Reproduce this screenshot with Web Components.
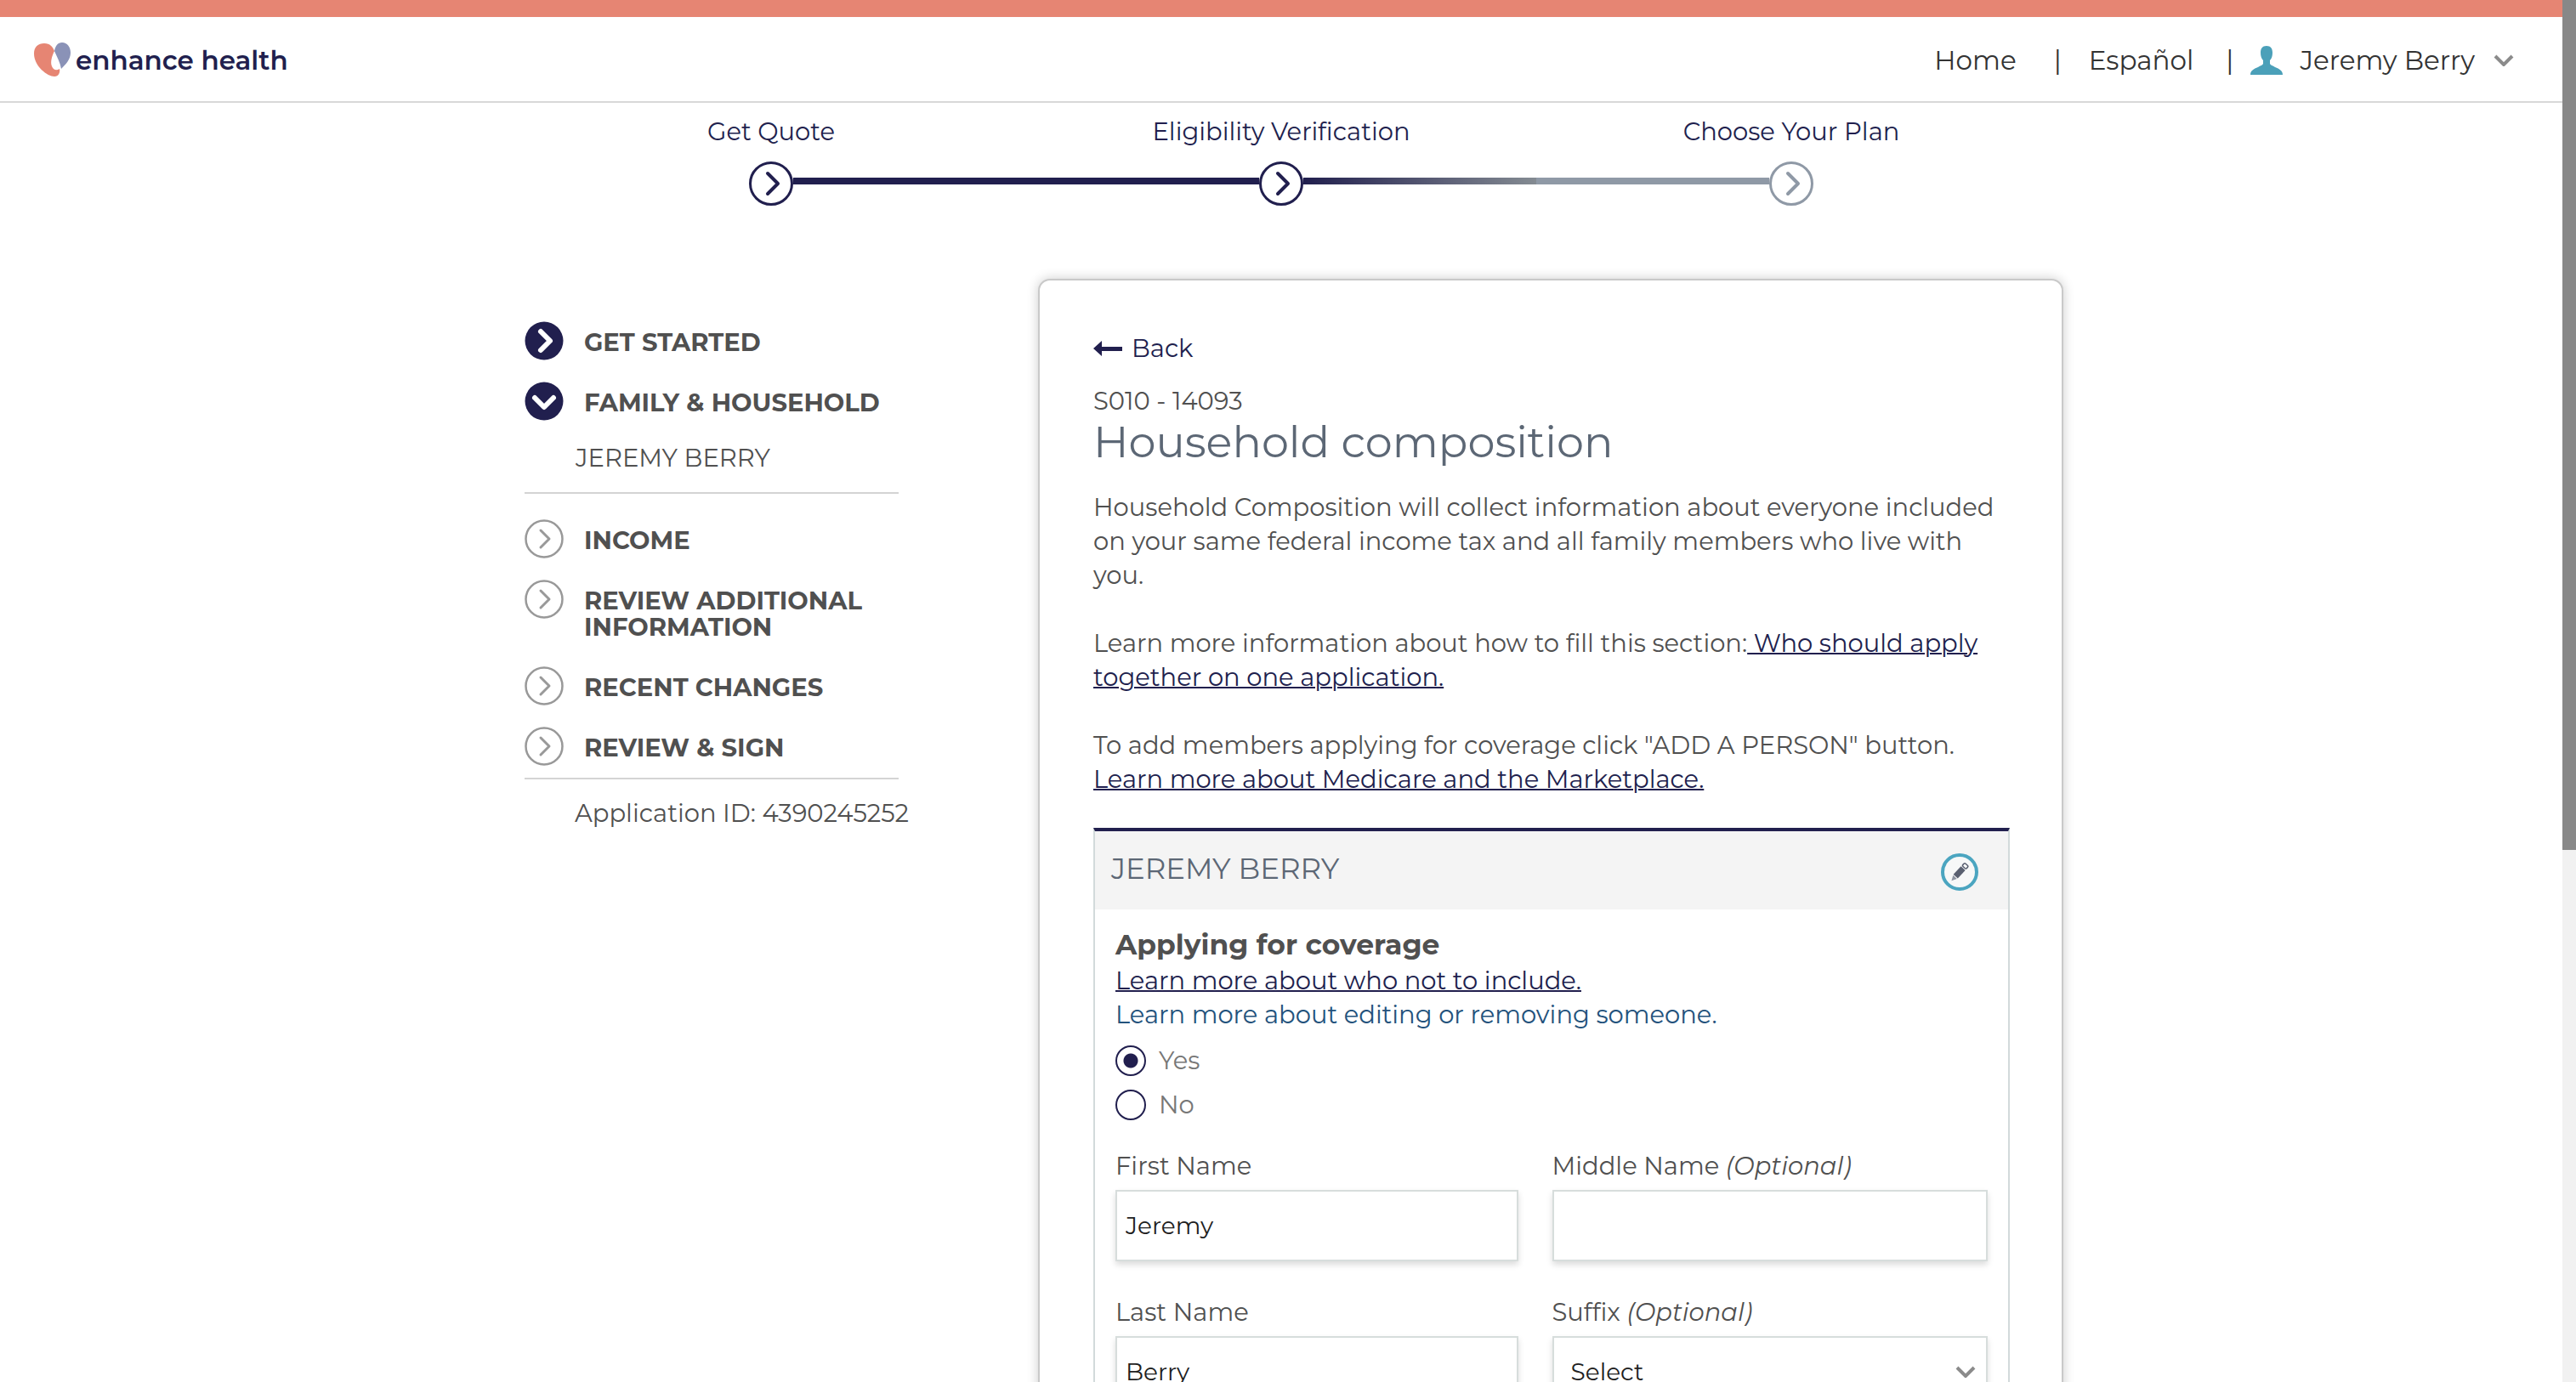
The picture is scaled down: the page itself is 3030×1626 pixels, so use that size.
<!DOCTYPE html>
<html lang="en">
<head>
<meta charset="utf-8">
<title>Household composition | enhance health</title>
<style>
  :root {
    --navy: #211f4e;
    --coral: #e68573;
    --slate: #5c6775;
    --grey: #8f99a6;
    --text: #505050;
    --rule: #d4d4d4;
    --field: #d7dddc;
  }
  body {
    margin: 0;
    font-family: Montserrat, Inter, "Open Sans", sans-serif;
    font-size: 29px;
    font-weight: 400;
    line-height: 40px;
    color: var(--text);
    background: #fff;
  }
</style>
</head>
<body>
<eh-app>
  <eh-header user="Jeremy Berry"></eh-header>
  <eh-stepper>
    <eh-step after="done">Get Quote</eh-step>
    <eh-step before="done" after="fade">Eligibility Verification</eh-step>
    <eh-step before="todo" class="todo">Choose Your Plan</eh-step>
  </eh-stepper>
  <eh-layout>
    <eh-sidebar slot="side" application="4390245252">
      <eh-nav-item state="done">GET STARTED</eh-nav-item>
      <eh-nav-item state="open">FAMILY &amp; HOUSEHOLD</eh-nav-item>
      <eh-nav-sub>JEREMY BERRY</eh-nav-sub>
      <eh-nav-item>INCOME</eh-nav-item>
      <eh-nav-item>REVIEW ADDITIONAL INFORMATION</eh-nav-item>
      <eh-nav-item>RECENT CHANGES</eh-nav-item>
      <eh-nav-item>REVIEW &amp; SIGN</eh-nav-item>
    </eh-sidebar>
    <eh-card code="S010 - 14093" heading="Household composition">
      <eh-intro></eh-intro>
      <eh-person name="JEREMY BERRY">
        <eh-coverage></eh-coverage>
        <eh-fields>
          <eh-field label="First Name" value="Jeremy"></eh-field>
          <eh-field label="Middle Name" optional></eh-field>
          <eh-field label="Last Name" value="Berry"></eh-field>
          <eh-field label="Suffix" optional options="Select,Jr.,Sr.,III,IV"></eh-field>
        </eh-fields>
      </eh-person>
    </eh-card>
  </eh-layout>
</eh-app>

<script>
const define = (name, render, ready) => customElements.define(name, class extends HTMLElement {
  constructor() {
    super();
    this.attachShadow({ mode: 'open' });
  }
  connectedCallback() {
    this.shadowRoot.innerHTML =
      '<style>*{box-sizing:border-box}:host{display:block;box-sizing:border-box}a{color:inherit;text-decoration:none}button{font:inherit;color:inherit;background:none;border:0;padding:0;cursor:pointer}svg{display:block;flex:none}</style>' + render(this);
    if (ready) ready(this);
  }
});

define('eh-app', () => `
  <style>
    :host { display: flex; height: 100vh; }
    .view { flex: 1; min-width: 0; overflow-y: auto; scrollbar-width: none; }
    .track { flex: none; width: 16px; background: #f1f1f1; }
    .thumb { height: 61.5%; background: #888; }
  </style>
  <div class="view"><slot></slot></div>
  <div class="track" aria-hidden="true"><div class="thumb"></div></div>`,
  el => {
    const view = el.shadowRoot.querySelector('.view');
    const thumb = el.shadowRoot.querySelector('.thumb');
    view.addEventListener('scroll', () => {
      const free = view.clientHeight - thumb.offsetHeight;
      const range = view.scrollHeight - view.clientHeight;
      thumb.style.marginTop = range > 0 ? (view.scrollTop / range * free) + 'px' : 0;
    });
  });

define('eh-header', el => `
  <style>
    :host { border-top: 20px solid var(--coral); border-bottom: 2px solid #d8d8d8; }
    header { display: flex; align-items: center; justify-content: space-between; height: 99px; padding: 2px 57px 0 40px; }
    .logo { display: flex; align-items: center; gap: 6px; color: var(--navy); font-size: 31px; font-weight: 600; }
    nav { display: flex; align-items: center; color: #333; font-size: 31px; }
    .bar { padding: 0 32px 0 44px; }
    .bar.last { padding: 0 20px 0 38px; }
    button { display: flex; align-items: center; gap: 20px; }
    .chev { margin-left: 2px; }
  </style>
  <header>
    <a class="logo" href="#">
      <svg width="43" height="41" viewBox="0 0 43 41" aria-hidden="true">
        <path fill="#e68573" d="M0 13C0 5 5 1 12 1c7 0 10 4 12 9-3 6-5 13-3 18 2 5 6 5 9 3 1 4-1 9-6 9C16 40 0 28 0 13z"/>
        <path fill="#8a92b7" d="M24 10c1-6 4-10 9-10 6 0 10 5 10 12 0 8-6 14-11 19-1-7-5-14-8-21z"/>
      </svg>
      <span>enhance health</span>
    </a>
    <nav>
      <a href="#">Home</a><span class="bar">|</span>
      <a href="#">Español</a><span class="bar last">|</span>
      <button type="button">
        <svg width="38" height="34" viewBox="0 0 38 34" aria-hidden="true"><path fill="#4ba0b9" d="M19 0c5 0 7 3 7 8 0 4-1 7-3 9v4c1 2 3 2 6 4 5 2 9 4 9 9H0c0-5 4-7 9-9 3-2 5-2 6-4v-4c-2-2-3-5-3-9 0-5 2-8 7-8z"/></svg>
        <span>${el.getAttribute('user')}</span>
        <svg class="chev" width="24" height="14" viewBox="0 0 24 14" aria-hidden="true"><path d="M2 2l10 10L22 2" fill="none" stroke="#8b8b8b" stroke-width="4"/></svg>
      </button>
    </nav>
  </header>`);

define('eh-stepper', () => `
  <style>
    :host { display: flex; max-width: 1800px; margin: 0 auto; padding-top: 14px; }
    ::slotted(*) { flex: 1; }
  </style>
  <slot></slot>`);

define('eh-step', () => `
  <style>
    :host { color: var(--navy); text-align: center; --ring: var(--navy); }
    :host(.todo) { --ring: var(--grey); }
    .row { display: flex; align-items: center; margin-top: 15px; }
    i { flex: 1; height: 8px; margin-bottom: 6px; }
    :host([before=done]) .before, :host([after=done]) .after { background: var(--navy); }
    :host([before=todo]) .before { background: var(--grey); }
    :host([after=fade]) .after { background: linear-gradient(90deg, #211f4e, #848b92); }
  </style>
  <span><slot></slot></span>
  <div class="row">
    <i class="before"></i>
    <svg width="52" height="52" viewBox="0 0 52 52" fill="none" stroke="var(--ring)" stroke-width="3" aria-hidden="true">
      <circle cx="26" cy="26" r="24.5"/><path d="M22 14l12 12-12 12" stroke-width="4" stroke-linecap="round" stroke-linejoin="round"/>
    </svg>
    <i class="after"></i>
  </div>`);

define('eh-layout', () => `
  <style>
    :host { display: flex; gap: 164px; max-width: 1840px; margin: 86px auto 0; padding-left: 30px; align-items: flex-start; }
    .side { flex: none; width: 440px; padding-top: 50px; }
    .main { flex: 1; min-width: 0; }
  </style>
  <div class="side"><slot name="side"></slot></div>
  <div class="main"><slot></slot></div>`);

define('eh-sidebar', el => `
  <style>
    nav { display: flex; flex-direction: column; gap: 25px; padding-bottom: 14px; border-bottom: 2px solid var(--rule); }
    p { margin: 20px 0 0; padding-left: 59px; white-space: nowrap; }
  </style>
  <nav><slot></slot></nav>
  <p>Application ID: ${el.getAttribute('application')}</p>`);

define('eh-nav-item', el => {
  const state = el.getAttribute('state');
  const icon = state
    ? `<circle cx="23" cy="23" r="22.5" fill="var(--navy)"/><path d="${state === 'open' ? 'M12 19l11 11 11-11' : 'M19 12l11 11-11 11'}" fill="none" stroke="#fff" stroke-width="6" stroke-linecap="round" stroke-linejoin="round"/>`
    : `<g fill="none" stroke="#999" stroke-width="2.5"><circle cx="23" cy="23" r="21.5"/><path d="M19 13l10 10-10 10" stroke-width="3" stroke-linecap="round" stroke-linejoin="round"/></g>`;
  return `
  <style>
    a { display: flex; align-items: flex-start; gap: 24px; font-weight: 700; line-height: 31px; }
    span { padding: 9px 0 6px; }
  </style>
  <a href="#"><svg width="46" height="46" viewBox="0 0 46 46" aria-hidden="true">${icon}</svg><span><slot></slot></span></a>`;
});

define('eh-nav-sub', () => `
  <style>
    :host { padding: 0 0 20px 60px; margin: -1px 0 5px; border-bottom: 2px solid var(--rule); }
  </style>
  <a href="#"><slot></slot></a>`);

define('eh-card', el => `
  <style>
    :host { border: 2px solid #c9c9c9; border-radius: 14px; box-shadow: 0 0 14px rgba(0,0,0,.2); padding: 59px 61px 60px 63px; background: #fff; }
    .back { display: inline-flex; align-items: center; gap: 10px; color: var(--navy); }
    .code { margin-top: 22px; }
    h1 { margin: 0 0 29px; font-size: 51px; line-height: 56px; font-weight: 400; color: var(--slate); }
  </style>
  <a class="back" href="#"><svg width="35" height="18" viewBox="0 0 35 18" aria-hidden="true"><path fill="#211f4e" d="M0 9l10-9v7h24v5H10v6z"/></svg>Back</a>
  <div class="code">${el.getAttribute('code')}</div>
  <h1>${el.getAttribute('heading')}</h1>
  <slot></slot>`);

define('eh-intro', () => `
  <style>
    :host { margin-bottom: 37px; }
    p { margin: 0 0 40px; }
    p:last-child { margin: 0; }
    a { color: var(--navy); text-decoration: underline; text-decoration-thickness: 2px; }
  </style>
  <p>Household Composition will collect information about everyone included on your same federal income tax and all family members who live with you.</p>
  <p>Learn more information about how to fill this section:<a href="#"> Who should apply together on one application.</a></p>
  <p>To add members applying for coverage click "ADD A PERSON" button. <a href="#">Learn more about Medicare and the Marketplace.</a></p>`);

define('eh-person', el => `
  <style>
    :host { border: 2px solid #d2dadb; border-top: 4px solid var(--navy); }
    header { display: flex; align-items: center; justify-content: space-between; height: 92px; padding: 0 35px 0 19px; background: #f4f4f4; }
    h2 { margin: 0; padding-bottom: 4px; font-size: 34px; font-weight: 400; color: var(--slate); }
    button { padding-top: 4px; }
    .body { padding: 21px 24px; }
  </style>
  <header>
    <h2>${el.getAttribute('name')}</h2>
    <button type="button" aria-label="Edit">
      <svg width="44" height="44" viewBox="0 0 44 44" aria-hidden="true">
        <circle cx="22" cy="22" r="20" fill="#f7f8f8" stroke="#4ba5c0" stroke-width="4"/>
        <g transform="translate(22 22) rotate(-47)"><rect x="-7" y="-3.5" width="13" height="7" fill="#5a6070"/><rect x="7.5" y="-3" width="4.5" height="6" rx="1.5" fill="none" stroke="#5a6070" stroke-width="1.5"/><path d="M-8-3L-14 0l6 3z" fill="#8d93a0"/></g>
      </svg>
    </button>
  </header>
  <div class="body"><slot></slot></div>`);

define('eh-coverage', () => `
  <style>
    fieldset { display: flex; flex-direction: column; align-items: flex-start; border: 0; margin: 0; padding: 0; min-width: 0; }
    legend { padding: 0; margin-bottom: 3px; font-size: 33px; font-weight: 700; }
    .who { color: var(--navy); text-decoration: underline; text-decoration-thickness: 2px; }
    .edit { color: #23527c; }
    label { display: flex; align-items: center; gap: 15px; margin-top: 16px; line-height: 36px; color: #777; }
    input { appearance: none; width: 36px; height: 36px; margin: 0; border: 2px solid var(--navy); border-radius: 50%; background: #fff; }
    input:checked { background: radial-gradient(circle, var(--navy) 8px, #fff 9px); }
  </style>
  <fieldset>
    <legend>Applying for coverage</legend>
    <a class="who" href="#">Learn more about who not to include.</a>
    <a class="edit" href="#">Learn more about editing or removing someone.</a>
    <label><input type="radio" name="coverage" value="yes" checked>Yes</label>
    <label><input type="radio" name="coverage" value="no">No</label>
  </fieldset>`);

define('eh-fields', () => `
  <style>
    :host { display: grid; grid-template-columns: 474fr 513fr; gap: 40px; margin-top: 34px; }
  </style>
  <slot></slot>`);

define('eh-field', el => {
  const options = el.getAttribute('options');
  const control = options
    ? `<div class="pick"><select id="control">${options.split(',').map(o => `<option>${o}</option>`).join('')}</select><svg width="24" height="14" viewBox="0 0 24 14" aria-hidden="true"><path d="M2 2l10 10L22 2" fill="none" stroke="#8b8b8b" stroke-width="4"/></svg></div>`
    : `<input id="control" type="text" value="${el.getAttribute('value') || ''}">`;
  return `
  <style>
    label { display: block; margin-bottom: 8px; }
    input, select { display: block; width: 100%; height: 84px; margin: 0; padding: 0 10px; border: 2px solid var(--field); border-radius: 0; background: #fff; color: #1f1f1f; font: inherit; font-size: 28px; box-shadow: 0 4px 7px rgba(0,0,0,.14); }
    .pick { display: grid; align-items: center; }
    .pick > * { grid-area: 1 / 1; }
    .pick svg { justify-self: end; margin-right: 14px; pointer-events: none; }
    select { appearance: none; padding-left: 20px; }
  </style>
  <label for="control">${el.getAttribute('label')}${el.hasAttribute('optional') ? ' <em>(Optional)</em>' : ''}</label>
  ${control}`;
});
</script>
</body>
</html>
